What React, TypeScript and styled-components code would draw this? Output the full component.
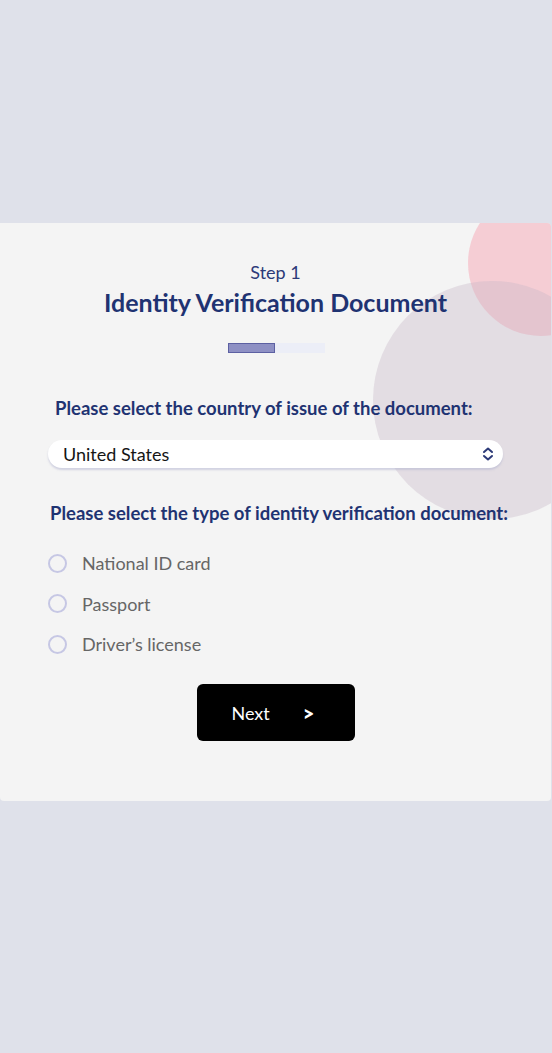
import React, { useState } from "react";
import styled, { createGlobalStyle } from "styled-components";

const Global = createGlobalStyle`
  html, body { margin: 0; padding: 0; background: #dfe1ea; }
  body { font-family: "Lato", "Noto Sans", sans-serif; }
`;

const Page = styled.div`
  width: 552px;
  min-height: 1053px;
  padding-top: 223px;
  box-sizing: border-box;
`;

const Card = styled.div`
  position: relative;
  overflow: hidden;
  width: 551px;
  height: 578px;
  background: #f4f4f4;
  border-radius: 0 4px 4px 4px;
  box-sizing: border-box;
  padding: 38px 0 0 0;
`;

const Blob = styled.div<{ $x: number; $y: number; $r: number; $c: string }>`
  position: absolute;
  left: ${(p) => p.$x - p.$r}px;
  top: ${(p) => p.$y - p.$r}px;
  width: ${(p) => p.$r * 2}px;
  height: ${(p) => p.$r * 2}px;
  border-radius: 50%;
  background: ${(p) => p.$c};
  pointer-events: none;
`;

const Content = styled.div`
  position: relative;
  display: flex;
  flex-direction: column;
`;

const Header = styled.div`
  display: flex;
  flex-direction: column;
  align-items: center;
  color: #1f3372;
`;

const StepLabel = styled.div`
  font-size: 18px;
  line-height: 22px;
  color: #2c3a78;
`;

const Title = styled.h1`
  margin: 4px 0 0;
  font-size: 25px;
  line-height: 30px;
  font-weight: 700;
  color: #1f3372;
`;

const Progress = styled.div`
  margin-top: 26px;
  width: 97px;
  height: 10px;
  background: #eceef7;
  display: flex;
  margin-left: 1px;
`;

const ProgressFill = styled.div`
  width: 47px;
  height: 10px;
  box-sizing: border-box;
  background: #8e90c4;
  border: 1px solid #5c60a2;
`;

const Label = styled.div<{ $indent: number }>`
  margin-left: ${(p) => p.$indent}px;
  font-size: 18.5px;
  font-weight: 700;
  color: #1f3372;
  line-height: 22px;
  white-space: nowrap;
`;

const SelectBox = styled.div`
  margin: 21px 0 0 48px;
  width: 455px;
  height: 28px;
  background: #ffffff;
  border-radius: 14px;
  box-shadow: 0 2px 2px rgba(180, 182, 210, 0.55);
  display: flex;
  align-items: center;
  justify-content: space-between;
  padding: 0 8px 0 15px;
  box-sizing: border-box;
  font-size: 18px;
  color: #151515;
`;

const RadioList = styled.div`
  margin: 28px 0 0 48px;
  display: flex;
  flex-direction: column;
  gap: 18.5px;
`;

const RadioRow = styled.label`
  display: flex;
  align-items: center;
  gap: 15px;
  height: 22px;
  cursor: pointer;
  font-size: 18px;
  color: #666666;
`;

const RadioCircle = styled.span<{ $on: boolean }>`
  width: 19px;
  height: 19px;
  box-sizing: border-box;
  border-radius: 50%;
  border: 2px solid #c6c7e4;
  background: ${(p) => (p.$on ? "#8e90c4" : "transparent")};
  flex: none;
`;

const ButtonRow = styled.div`
  display: flex;
  justify-content: center;
  margin-top: 29px;
`;

const NextButton = styled.button`
  width: 158px;
  height: 57px;
  background: #000;
  border: none;
  border-radius: 6px;
  color: #fff;
  font-family: "Lato", "Noto Sans", sans-serif;
  font-size: 18px;
  display: flex;
  align-items: center;
  padding: 0 0 0 35px;
  gap: 33px;
  cursor: pointer;
`;

const Arrow = styled.span`
  font-weight: 900;
  font-size: 20px;
`;

const Spacer = styled.div<{ $h: number }>`
  height: ${(p) => p.$h}px;
`;

const options = ["National ID card", "Passport", "Driver’s license"];

export default function App() {
  const [sel, setSel] = useState<number | null>(null);
  return (
    <Page>
      <Global />
      <Card>
        <Blob $x={541} $y={40} $r={73} $c="rgba(245, 190, 200, 0.72)" />
        <Blob $x={492} $y={177} $r={119} $c="rgba(200, 185, 200, 0.38)" />
        <Content>
          <Header>
            <StepLabel>Step 1</StepLabel>
            <Title>Identity Verification Document</Title>
            <Progress>
              <ProgressFill />
            </Progress>
          </Header>
          <Spacer $h={44} />
          <Label $indent={55}>Please select the country of issue of the document:</Label>
          <SelectBox>
            <span>United States</span>
            <svg width="14" height="16" viewBox="0 0 14 16" fill="none">
              <path d="M3 6 L7 2.5 L11 6" stroke="#2c3a78" strokeWidth="2" strokeLinecap="round" strokeLinejoin="round" />
              <path d="M3 10 L7 13.5 L11 10" stroke="#2c3a78" strokeWidth="2" strokeLinecap="round" strokeLinejoin="round" />
            </svg>
          </SelectBox>
          <Spacer $h={34} />
          <Label $indent={50}>Please select the type of identity verification document:</Label>
          <RadioList>
            {options.map((o, i) => (
              <RadioRow key={o} onClick={() => setSel(i)}>
                <RadioCircle $on={sel === i} />
                {o}
              </RadioRow>
            ))}
          </RadioList>
          <ButtonRow>
            <NextButton>
              <span>Next</span>
              <Arrow>&gt;</Arrow>
            </NextButton>
          </ButtonRow>
        </Content>
      </Card>
    </Page>
  );
}
